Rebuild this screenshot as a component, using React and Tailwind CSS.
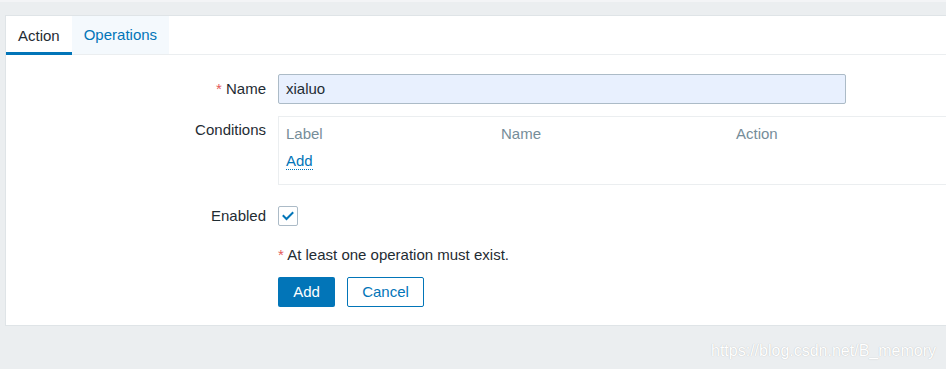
export default function App() {
  return (
    <div className="relative h-[369px] overflow-hidden border-t-2 border-[#f3f4f6] bg-[#ebeef0] pl-[5px] pt-[13px] font-['Liberation_Sans',Arial,sans-serif] text-[15px] leading-[18px] text-[#1f2c33]">
      <div className="border border-r-0 border-[#dfe4e7] bg-white pb-[18px]">
        {/* tabs */}
        <div className="flex h-[39px] border-b border-[#ebeef0]">
          <div className="-mb-px flex items-center border-b-[3px] border-[#0275b8] px-[12px] pt-[3px]">Action</div>
          <div className="flex items-center bg-[#f4f9fd] px-[12px] text-[#0275b8]">Operations</div>
        </div>

        <div className="pt-[19px]">
          {/* name */}
          <div className="flex items-center gap-[12px]">
            <div className="w-[260px] text-right">
              <span className="text-[#e45959]">*</span> Name
            </div>
            <div className="flex h-[30px] w-[568px] items-center rounded-[2px] border border-[#acbbc7] bg-[#e8f0fe] px-[7px]">xialuo</div>
          </div>

          {/* conditions */}
          <div className="mt-[12px] flex items-start gap-[12px]">
            <div className="w-[260px] pt-[5px] text-right">Conditions</div>
            <div className="h-[69px] flex-1 border border-r-0 border-[#ebeef0] px-[7px] pt-[8px]">
              <div className="flex text-[#768d99]">
                <div className="w-[215px]">Label</div>
                <div className="w-[235px]">Name</div>
                <div>Action</div>
              </div>
              <div className="mt-[9px]">
                <span className="border-b border-dotted border-[#0275b8] text-[#0275b8]">Add</span>
              </div>
            </div>
          </div>

          {/* enabled */}
          <div className="mt-[21px] flex items-center gap-[12px]">
            <div className="w-[260px] text-right">Enabled</div>
            <div className="flex h-[20px] w-[20px] items-center justify-center rounded-[2px] border border-[#acbbc7] bg-white">
              <svg width="14" height="14" viewBox="0 0 14 14" fill="none">
                <path d="M2.5 7l3 3 6-6" stroke="#0275b8" strokeWidth="2" strokeLinecap="square" />
              </svg>
            </div>
          </div>

          {/* message + buttons */}
          <div className="mt-[20px] pl-[272px]">
            <div>
              <span className="text-[#e45959]">*</span> At least one operation must exist.
            </div>
            <div className="mt-[13px] flex gap-[12px]">
              <button className="h-[30px] w-[57px] rounded-[2px] bg-[#0275b8] text-white">Add</button>
              <button className="h-[30px] w-[77px] rounded-[2px] border border-[#0275b8] bg-white text-[#0275b8]">Cancel</button>
            </div>
          </div>
        </div>
      </div>

      <div className="absolute bottom-[9px] right-[10px] text-[16px] text-white [text-shadow:0_0_1px_rgba(0,0,0,0.25)]">
        https://blog.csdn.net/B_memory
      </div>
    </div>
  );
}
